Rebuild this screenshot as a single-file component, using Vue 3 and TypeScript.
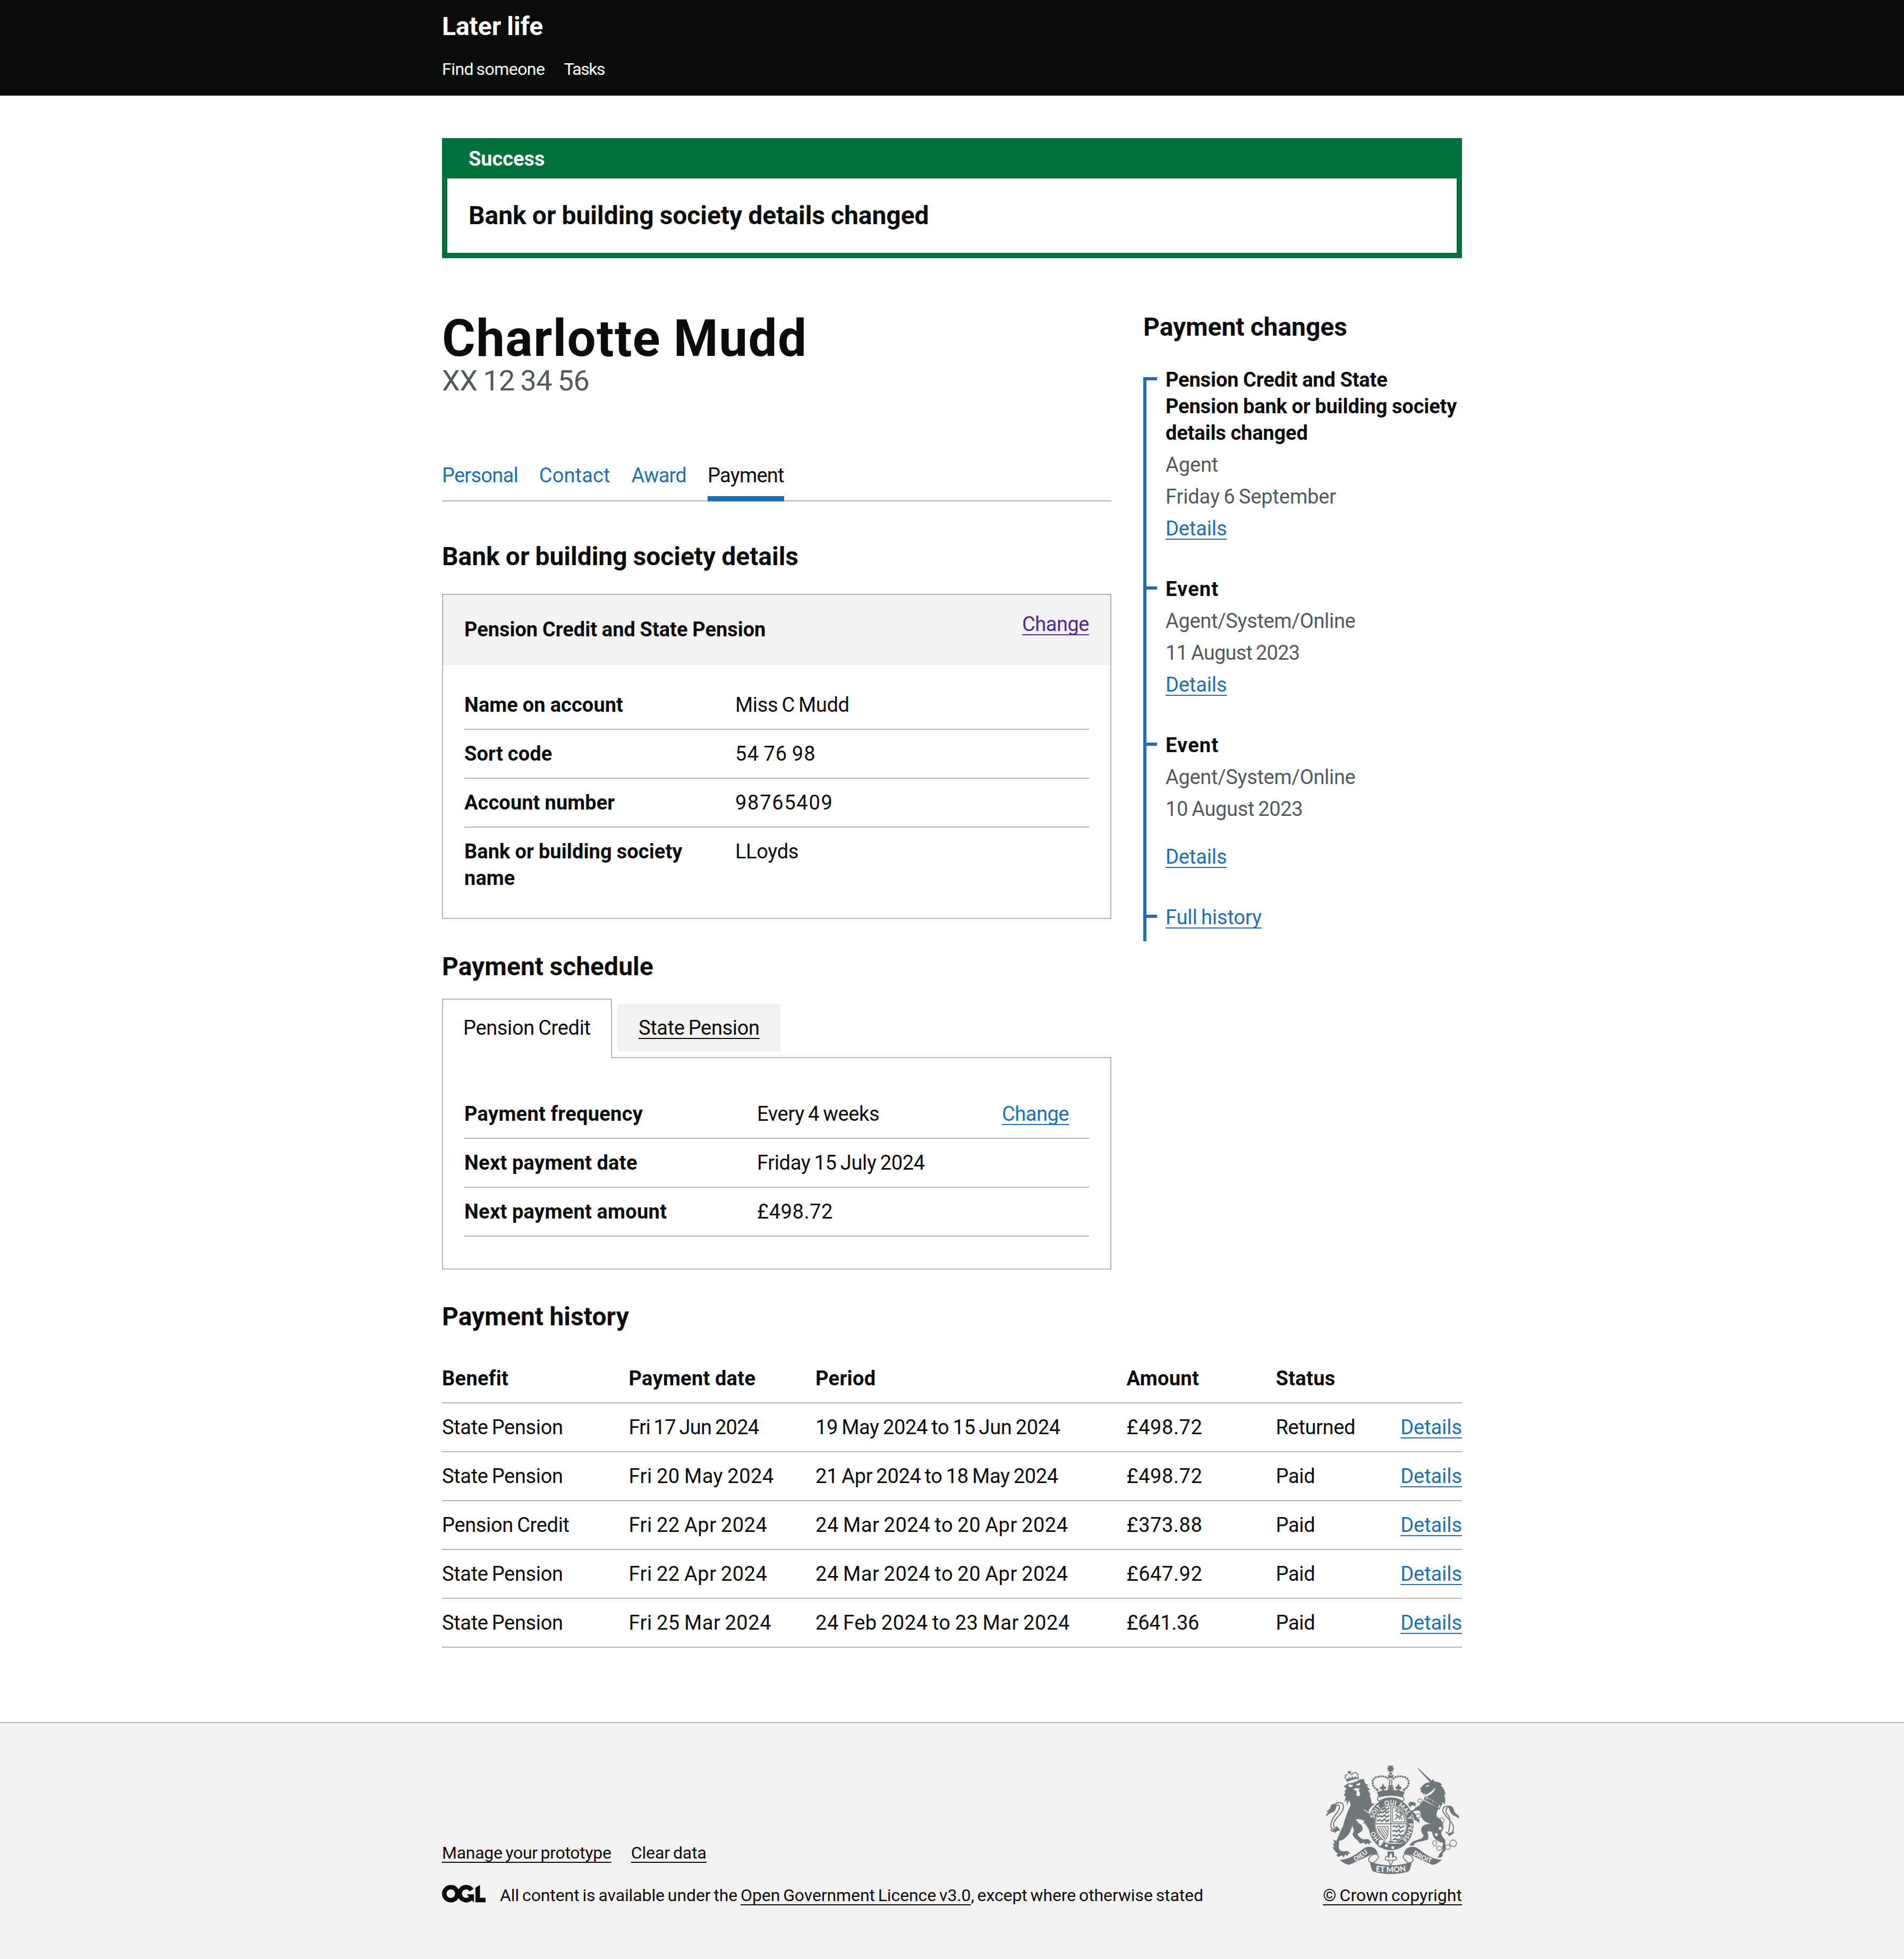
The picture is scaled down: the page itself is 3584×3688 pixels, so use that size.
<script setup lang="ts">
interface SummaryRow {
  key: string
  value: string
  action?: string
}

interface TimelineEvent {
  title: string
  by: string
  date: string
  spaced?: boolean
}

interface Payment {
  benefit: string
  date: string
  period: string
  amount: string
  status: string
}

const navigation: string[] = ['Find someone', 'Tasks']

const sections: { label: string; current: boolean }[] = [
  { label: 'Personal', current: false },
  { label: 'Contact', current: false },
  { label: 'Award', current: false },
  { label: 'Payment', current: true },
]

const account: SummaryRow[] = [
  { key: 'Name on account', value: 'Miss C Mudd' },
  { key: 'Sort code', value: '54 76 98' },
  { key: 'Account number', value: '98765409' },
  { key: 'Bank or building society name', value: 'LLoyds' },
]

const schedule: SummaryRow[] = [
  { key: 'Payment frequency', value: 'Every 4 weeks', action: 'Change' },
  { key: 'Next payment date', value: 'Friday 15 July 2024' },
  { key: 'Next payment amount', value: '£498.72' },
]

const events: TimelineEvent[] = [
  {
    title: 'Pension Credit and State Pension bank or building society details changed',
    by: 'Agent',
    date: 'Friday 6 September',
  },
  { title: 'Event', by: 'Agent/System/Online', date: '11 August 2023' },
  { title: 'Event', by: 'Agent/System/Online', date: '10 August 2023', spaced: true },
]

const payments: Payment[] = [
  { benefit: 'State Pension', date: 'Fri 17 Jun 2024', period: '19 May 2024 to 15 Jun 2024', amount: '£498.72', status: 'Returned' },
  { benefit: 'State Pension', date: 'Fri 20 May 2024', period: '21 Apr 2024 to 18 May 2024', amount: '£498.72', status: 'Paid' },
  { benefit: 'Pension Credit', date: 'Fri 22 Apr 2024', period: '24 Mar 2024 to 20 Apr 2024', amount: '£373.88', status: 'Paid' },
  { benefit: 'State Pension', date: 'Fri 22 Apr 2024', period: '24 Mar 2024 to 20 Apr 2024', amount: '£647.92', status: 'Paid' },
  { benefit: 'State Pension', date: 'Fri 25 Mar 2024', period: '24 Feb 2024 to 23 Mar 2024', amount: '£641.36', status: 'Paid' },
]

/** Picks the figure spacing: runs with a narrow 1 are set tighter than the rest. */
function figures(text: string): string {
  if (/^\d+$/.test(text)) return 'figures-wide'
  if (/^[\d ]+$/.test(text)) return 'figures-grouped'
  if (text.startsWith('11') || text.startsWith('Fri 17')) return 'figures-tight'
  return /\d{2}/.test(text) && !text.includes('1') ? 'figures' : ''
}
</script>

<template>
  <div class="page">
    <header class="header">
      <div class="container">
        <a class="service-name">Later life</a>
        <nav class="header-nav">
          <a v-for="item in navigation" :key="item">{{ item }}</a>
        </nav>
      </div>
    </header>

    <main class="container">
      <section class="banner">
        <h2 class="banner-title">Success</h2>
        <p class="banner-message">Bank or building society details changed</p>
      </section>

      <div class="columns">
        <div class="main-column">
          <h1>Charlotte Mudd</h1>
          <p class="nino">XX 12 34 56</p>

          <nav class="sections">
            <a v-for="s in sections" :key="s.label" :class="{ current: s.current }">{{ s.label }}</a>
          </nav>

          <h2 class="heading">Bank or building society details</h2>
          <section class="card">
            <div class="card-header">
              <h3>Pension Credit and State Pension</h3>
              <a class="link visited">Change</a>
            </div>
            <dl class="summary">
              <div v-for="row in account" :key="row.key" class="summary-row">
                <dt>{{ row.key }}</dt>
                <dd :class="figures(row.value)">{{ row.value }}</dd>
              </div>
            </dl>
          </section>

          <h2 class="heading schedule-heading">Payment schedule</h2>
          <div class="tab-list">
            <a class="tab selected">Pension Credit</a>
            <a class="tab"><span class="link plain">State Pension</span></a>
          </div>
          <section class="panel">
            <dl class="summary wide">
              <div v-for="row in schedule" :key="row.key" class="summary-row">
                <dt>{{ row.key }}</dt>
                <dd :class="figures(row.value)">{{ row.value }}</dd>
                <dd v-if="row.action" class="action"><a class="link">{{ row.action }}</a></dd>
              </div>
            </dl>
          </section>
        </div>

        <aside class="side-column">
          <h2 class="heading">Payment changes</h2>
          <ul class="timeline">
            <li v-for="(e, i) in events" :key="i">
              <h3>{{ e.title }}</h3>
              <p>{{ e.by }}</p>
              <p :class="figures(e.date)">{{ e.date }}</p>
              <a class="link" :class="{ spaced: e.spaced }">Details</a>
            </li>
            <li><a class="link">Full history</a></li>
          </ul>
        </aside>
      </div>

      <h2 class="heading history-heading">Payment history</h2>
      <table>
        <thead>
          <tr>
            <th class="c1">Benefit</th>
            <th class="c2">Payment date</th>
            <th class="c3">Period</th>
            <th class="c4">Amount</th>
            <th class="c5">Status</th>
            <th></th>
          </tr>
        </thead>
        <tbody>
          <tr v-for="(p, i) in payments" :key="i">
            <td>{{ p.benefit }}</td>
            <td :class="figures(p.date)">{{ p.date }}</td>
            <td :class="figures(p.period)">{{ p.period }}</td>
            <td :class="figures(p.amount)">{{ p.amount }}</td>
            <td>{{ p.status }}</td>
            <td class="right"><a class="link">Details</a></td>
          </tr>
        </tbody>
      </table>
    </main>

    <footer class="footer">
      <div class="container footer-inner">
        <div class="footer-left">
          <div class="footer-links">
            <a class="link plain manage">Manage your prototype</a>
            <a class="link plain">Clear data</a>
          </div>
          <div class="licence">
            <svg class="ogl" viewBox="0 0 483.2 195.7" aria-hidden="true">
              <path
                fill="currentColor"
                d="M421.5 142.8V.1l-50.7 32.3v161.1h112.4v-50.7zm-122.3-9.6A47.12 47.12 0 0 1 221 97.8c0-26 21.1-47.1 47.1-47.1 16.7 0 31.4 8.7 39.7 21.8l42.7-27.2A97.63 97.63 0 0 0 268.1 0c-36.5 0-68.3 20.1-85.1 49.7A98 98 0 0 0 97.8 0C43.9 0 0 43.9 0 97.8s43.9 97.8 97.8 97.8c36.5 0 68.3-20.1 85.1-49.7a97.76 97.76 0 0 0 149.6 25.4l19.4 22.2h3v-87.8h-80l24.3 27.5zM97.8 145c-26 0-47.1-21.1-47.1-47.1s21.1-47.1 47.1-47.1 47.1 21.1 47.1 47.1S123.8 145 97.8 145"
              />
            </svg>
            <span>All content is available under the <a class="link plain">Open Government Licence v3.0</a>, except where otherwise stated</span>
          </div>
        </div>

        <div class="footer-right">
          <svg class="crest" viewBox="108 72 750 612" aria-hidden="true">
            <defs>
              <path id="garter" d="M475 513C420 513 375 463 375 402S420 291 475 291S575 341 575 402S530 513 475 513" />
              <path id="dieu" d="M252 622Q314 598 362 548" />
              <path id="droit" d="M584 562Q640 606 716 627" />
              <path id="etmon" d="M380 668Q474 682 568 666" />
            </defs>

            <!-- lion -->
            <g class="ink">
              <path
                d="M207 190L226 178L232 168Q252 170 272 160Q292 149 322 148L328 172L350 184L336 186L360 211L344 208L362 240L352 236Q366 262 364 284L383 289Q358 304 348 330L366 352Q376 362 366 374L383 398L380 428L368 420L362 432L352 420L344 428L340 412L330 412L334 398L320 400L324 384Q300 370 276 376Q288 396 302 402Q322 418 312 440L286 458Q294 478 318 488L346 487L368 507L354 506L356 520L340 509L332 519L322 506L300 513L288 495Q262 478 258 460L266 438L256 411Q250 438 236 460Q212 492 182 498L180 538Q184 554 206 556L232 554L245 570L232 569L230 584L216 574L208 590L196 578L178 589L168 580L174 568Q154 556 144 528L156 534L144 510L156 516L150 490L166 498Q190 440 204 414Q220 350 248 292L238 268L226 298L224 266L212 278L220 246L208 240L220 218L210 222L224 200Z"
              />
              <path d="M168 293Q152 282 138 294L130 312Q122 326 110 330Q114 334 122 333Q108 344 109 360Q124 342 150 334Q166 322 168 293Z" />
              <path d="M128 432Q140 440 150 438L140 424L158 430L166 414Q184 424 186 438Q170 438 154 456L156 446Q136 448 128 432Z" />
              <path d="M218 140L224 150L236 144L240 134L248 146L256 130L264 142L274 130L278 140L288 136L286 146Q258 150 230 162Z" />
              <path d="M234 102L241 105L246 100L248 108L254 110L247 114L246 121L240 117L233 119L235 112L230 107Z" />
            </g>
            <path class="line w6" d="M160 288C188 274 204 282 207 300C209 326 182 350 164 374C148 396 146 416 160 424" />
            <path class="line w6" d="M164 298C190 286 188 312 172 336C148 364 132 390 136 416L142 436" />
            <path class="beads small" d="M228 158L214 136Q220 118 236 124M290 146L288 122Q278 106 262 114L250 124" />
            <g class="paper">
              <path d="M232 180Q250 176 262 184Q252 196 240 192Z" />
              <path d="M276 178L302 168L300 180Q288 188 276 178Z" />
              <path d="M262 206L276 198L300 202L292 214Q304 226 300 238Q292 250 280 240L282 216Z" />
            </g>
            <path class="gap" d="M322 320L366 350M232 172Q270 168 296 150" />

            <!-- unicorn -->
            <g class="ink">
              <path
                d="M624 88L630 88L706 158L708 146L722 162Q752 164 764 180L754 182Q778 198 784 238L774 232Q786 262 778 294L768 276L762 298L676 246Q722 228 725 196Q706 222 664 240L670 226L656 234L652 222L640 222L648 212L638 206Q650 182 676 168L696 166Z"
              />
              <path
                d="M656 272Q700 284 742 316Q728 342 734 360Q768 380 770 410Q774 434 758 446Q758 470 782 492L782 552L766 566Q772 576 760 590L738 592L748 572L764 552L768 508Q744 504 728 490Q710 474 708 448Q690 438 680 446Q690 470 684 490Q650 500 622 504Q600 514 606 524L580 524Q584 508 604 498L650 482L660 468Q636 438 652 416Q662 402 700 400Q660 392 646 362L640 330L622 324L598 332L612 344L622 370L636 376L634 396L620 384L606 378L596 344L580 330L606 320L616 304L600 296L590 296L586 310L572 292L582 276L606 278L634 300Q642 282 656 272Z"
              />
              <path d="M796 300Q818 294 828 314Q828 334 858 356L857 372Q846 358 828 354Q806 340 800 304Z" />
              <path d="M786 442Q800 462 828 442L832 456L820 452L824 462Q808 460 806 474Q800 456 784 452Z" />
            </g>
            <path class="line w6" d="M808 302C780 296 766 308 768 328C774 354 812 376 826 410Q832 430 820 448M802 306C782 310 780 332 796 350C812 366 812 398 800 446" />
            <path class="collar" d="M668 248L756 296L748 316L660 272Z" />
            <path class="ink" d="M668 268L666 254L678 262L686 256L692 268L704 264L708 278L722 274L724 286L738 284L746 294L742 310Z" />
            <path class="paper" d="M668 190Q680 178 694 184Q684 192 668 190Z" />
            <g class="chain">
              <ellipse cx="638" cy="270" rx="12" ry="10" />
              <ellipse cx="628" cy="355" rx="13" ry="12" />
              <ellipse cx="762" cy="381" rx="13" ry="14" />
              <ellipse cx="722" cy="510" rx="11" ry="14" />
              <ellipse cx="747" cy="538" rx="14" ry="12" />
              <ellipse cx="796" cy="532" rx="14" ry="13" />
              <circle cx="826" cy="511" r="19" />
            </g>
            <g class="paper">
              <ellipse cx="620" cy="298" rx="7" ry="9" />
              <ellipse cx="753" cy="427" rx="8" ry="9" />
              <ellipse cx="731" cy="461" rx="8" ry="9" />
            </g>

            <!-- crown -->
            <g class="ink">
              <path d="M456 72L490 72L482 84L490 80L490 100L480 94L490 106L456 106L466 94L456 100L456 80L466 84Z" />
              <path d="M473 106L486 122L460 122Z" />
              <path d="M456 126H491Q489 143 473 143Q458 143 456 126Z" />
              <path d="M464 150H470V184H464ZM476 150H482V184H476Z" />
              <path d="M457 184L489 184L480 197L490 192V212L480 206L486 220H460L466 206L457 212V192L466 197Z" />
              <path d="M430 172L438 190L448 192L444 206L434 204L438 216H422L426 204L414 206L412 194L422 190Z" />
              <path d="M517 172L509 190L499 192L503 206L513 204L509 216H525L521 204L533 206L535 194L525 190Z" />
              <path d="M388 198L408 208L396 218ZM558 198L538 208L552 218Z" />
              <path d="M396 220Q473 198 552 220L544 246Q473 232 404 246Z" />
            </g>
            <path class="beads" d="M394 206C366 190 360 146 396 136C422 128 444 132 460 146" />
            <path class="beads" d="M552 206C580 190 586 146 550 136C524 128 502 132 488 146" />

            <!-- garter and shield -->
            <path class="roll" d="M408 272Q392 264 402 250Q473 228 545 250Q554 264 540 272Q473 236 408 272Z" />
            <ellipse class="ink" cx="475" cy="402" rx="128" ry="148" />
            <ellipse class="paper" cx="475" cy="402" rx="92" ry="110" />
            <ellipse class="shield" cx="475" cy="402" rx="88" ry="105" />
            <path class="line w5" d="M474 298V506M387 400H563" />
            <path class="line w7" d="M408 344Q414 330 426 338L442 326L448 340L466 330M400 362Q414 350 424 362L440 350L448 364L466 352M396 386Q410 372 424 386L440 374L450 388L466 376M426 322L440 312L450 322L466 310" />
            <path class="line w7" d="M484 418Q494 408 506 420L520 410L528 424L550 412M484 444Q496 432 506 446L520 434L528 448L548 436M484 470Q496 458 508 472L522 460L530 472L542 462M486 492L500 484L514 494L522 486" />
            <path class="line w4" d="M400 416H458V440Q460 470 444 488Q410 466 398 416M412 422L446 474M424 420L454 466M438 420L456 448M404 430L440 480" />
            <path class="line w4" d="M484 308Q546 318 554 390H484Z" />
            <path class="line w6" d="M496 330L508 322L512 336L524 334L534 352L524 358L538 376M500 348L512 354L506 370L496 376M514 354L524 376M530 334L540 346" />
            <path class="ink" d="M462 498H488V506H462Z" />
            <g class="motto">
              <text><textPath href="#garter" startOffset="15%">HO</textPath></text>
              <text><textPath href="#garter" startOffset="35.5%">SOIT</textPath></text>
              <text><textPath href="#garter" startOffset="49.5%">QUI</textPath></text>
              <text><textPath href="#garter" startOffset="64%">MAL Y</textPath></text>
              <text><textPath href="#garter" startOffset="82%">PENSE</textPath></text>
            </g>
            <path class="outlined" d="M400 500Q412 484 424 488L440 496L424 520L410 530Q396 516 406 508Z" />
            <circle class="paper" cx="449" cy="523" r="8" />
            <circle class="paper" cx="485" cy="535" r="8" />
            <path class="gap" d="M428 494Q474 520 540 508" />

            <!-- fleur-de-lis -->
            <path class="ink" d="M456 557H492V598H456Z" />
            <path
              class="outlined"
              d="M474 562Q488 576 482 592Q496 576 506 592Q508 606 492 606Q484 606 484 614L476 632H472L464 614Q464 606 456 606Q440 606 442 592Q452 576 466 592Q460 576 474 562Z"
            />
            <path class="line w4" d="M456 606H492" />

            <!-- ribbon -->
            <g class="outlined">
              <path d="M348 604Q350 584 376 574Q396 570 406 584Q400 604 374 622Q350 620 348 604Z" />
              <path d="M600 604Q598 584 572 574Q552 570 542 584Q548 604 574 622Q598 620 600 604Z" />
            </g>
            <g class="ink">
              <path d="M186 604Q250 600 312 546Q340 522 374 534Q392 540 402 572Q374 568 348 582Q310 600 240 632Q214 632 186 604Z" />
              <path d="M762 604Q698 600 636 546Q608 522 574 534Q556 540 546 572Q574 568 600 582Q638 600 708 632Q734 632 762 604Z" />
              <path d="M356 614Q474 656 592 614Q586 658 574 670Q530 684 474 684T374 670Q362 658 356 614Z" />
            </g>
            <g class="motto large">
              <text><textPath href="#dieu" startOffset="50%">DIEU</textPath></text>
              <text><textPath href="#droit" startOffset="50%">DROIT</textPath></text>
              <text class="bottom"><textPath href="#etmon" startOffset="50%">ET MON</textPath></text>
            </g>
          </svg>
          <a class="link plain crown">© Crown copyright</a>
        </div>
      </div>
    </footer>
  </div>
</template>

<style>
body {
  background: #fff;
}
</style>

<style scoped>
.page {
  color: #0b0c0c;
  font-family: Roboto, 'Liberation Sans', sans-serif;
  font-size: 38px;
  line-height: 50px;
  letter-spacing: -0.009em;
  word-spacing: -0.05em;
}

h1,
h2,
h3,
p,
ul,
dl,
dd {
  margin: 0;
  padding: 0;
}

h1,
h2,
h3,
dt,
th,
.service-name,
.banner-message {
  font-weight: 700;
  letter-spacing: -0.001em;
  word-spacing: -0.015em;
}

h3 {
  font-size: 38px;
}

.figures {
  letter-spacing: 0.015em;
}

.figures-wide {
  letter-spacing: 0.045em;
}

.figures-grouped {
  letter-spacing: 0.028em;
}

.timeline .figures-tight,
.figures-tight {
  letter-spacing: -0.02em;
}

.container {
  width: 1920px;
  margin: 0 auto;
}

.header {
  box-sizing: border-box;
  height: 180px;
  padding-top: 20px;
  color: #fff;
  background: #0b0c0c;
}

.service-name {
  display: block;
  font-size: 48px;
  line-height: 60px;
}

.header-nav {
  display: flex;
  gap: 36px;
  margin-top: 30px;
  font-size: 32px;
  line-height: 40px;
  letter-spacing: -0.017em;
}

.header-nav a + a {
  letter-spacing: -0.045em;
}

.banner {
  margin-top: 80px;
  border: 10px solid #00703c;
}

.banner-title {
  padding: 4px 40px 12px;
  color: #fff;
  background: #00703c;
  font-size: 38px;
}

.banner-message {
  padding: 40px;
  font-size: 48px;
  line-height: 60px;
}

.columns {
  display: flex;
  gap: 60px;
  align-items: flex-start;
  margin-top: 101px;
}

.main-column {
  width: 1260px;
}

.side-column {
  width: 600px;
  margin-top: -1px;
}

h1 {
  font-size: 96px;
  line-height: 100px;
  letter-spacing: 0.0145em;
}

.nino {
  color: #505a5f;
  font-size: 54px;
  line-height: 60px;
  letter-spacing: -0.012em;
}

.sections {
  display: flex;
  gap: 40px;
  margin-top: 123px;
  border-bottom: 2px solid #b1b4b6;
  letter-spacing: -0.02em;
}

.sections a {
  margin-bottom: -2px;
  padding-bottom: 14px;
  border-bottom: 10px solid transparent;
  color: #1d70b8;
}

.sections a:nth-child(2) {
  letter-spacing: 0.003em;
}

.sections .current {
  border-bottom-color: #1d70b8;
  color: #0b0c0c;
}

.heading {
  font-size: 48px;
  line-height: 60px;
}

.schedule-heading,
.history-heading {
  letter-spacing: 0.001em;
}

.sections + .heading {
  margin-top: 74px;
}

.link {
  color: #1d70b8;
  text-decoration: underline;
  text-decoration-thickness: 2px;
  text-decoration-skip-ink: none;
  text-underline-offset: 6px;
}

.link.visited {
  color: #4c2c92;
}

.link.plain {
  color: #0b0c0c;
}

.card {
  margin-top: 40px;
  border: 2px solid #b1b4b6;
}

.card-header {
  display: flex;
  justify-content: space-between;
  box-sizing: border-box;
  height: 132px;
  padding: 30px 40px;
  background: #f3f2f1;
}

.card-header h3 {
  margin-top: 10px;
}

.card-header .link,
.action .link {
  letter-spacing: -0.012em;
}

.card .summary {
  padding: 30px 40px;
}

.summary-row {
  display: flex;
  padding: 20px 0;
  border-bottom: 2px solid #b1b4b6;
}

.card .summary-row:last-child {
  border-bottom: 0;
}

.summary dt {
  box-sizing: border-box;
  flex: none;
  width: 510px;
  padding-right: 60px;
  letter-spacing: 0.002em;
}

.summary.wide dt {
  width: 551px;
  letter-spacing: 0.008em;
}

.summary .action {
  margin-left: auto;
  padding-right: 38px;
}

.schedule-heading {
  margin-top: 60px;
}

.tab-list {
  display: flex;
  align-items: flex-start;
  gap: 10px;
  margin-top: 30px;
}

.tab {
  box-sizing: border-box;
  width: 307px;
  height: 90px;
  margin-top: 10px;
  padding: 20px 0 20px 40px;
  background: #f3f2f1;
  white-space: nowrap;
}

.tab.selected {
  position: relative;
  width: 320px;
  height: 112px;
  margin: 0 0 -2px;
  padding: 28px 0 0 38px;
  border: 2px solid #b1b4b6;
  border-bottom: 0;
  background: #fff;
}

.panel {
  padding: 60px 40px;
  border: 2px solid #b1b4b6;
}

.timeline {
  display: flow-root;
  margin-top: 64px;
  padding: 0 0 20px 36px;
  border-left: 6px solid #1d70b8;
  list-style: none;
}

.timeline li {
  position: relative;
  margin-top: 64px;
}

.timeline li:first-child {
  margin-top: -20px;
}

/* connects each event to the vertical line */
.timeline li::before {
  content: '';
  position: absolute;
  top: 20px;
  left: -36px;
  width: 20px;
  height: 6px;
  background: #1d70b8;
}

.timeline h3 {
  letter-spacing: -0.004em;
}

.timeline li + li h3 {
  letter-spacing: 0.03em;
}

.timeline h3,
.timeline p {
  margin-bottom: 10px;
}

.timeline p {
  color: #505a5f;
}

.timeline li:first-child p {
  letter-spacing: -0.003em;
}

.timeline .link {
  display: block;
  width: fit-content;
  letter-spacing: -0.003em;
}

.timeline .spaced {
  margin-top: 40px;
}

.history-heading {
  margin-top: 59px;
}

table {
  width: 100%;
  margin-top: 41px;
  border-collapse: separate;
  border-spacing: 0;
  table-layout: fixed;
}

th,
td {
  height: 50px;
  padding: 20px 0;
  border-bottom: 2px solid #b1b4b6;
  text-align: left;
  white-space: nowrap;
}

th {
  letter-spacing: 0.008em;
}

.c1,
.c2 {
  width: 351.5px;
}

.c3 {
  width: 585.5px;
}

.c4 {
  width: 281px;
}

.c5 {
  width: 200px;
}

.right {
  letter-spacing: -0.002em;
  text-align: right;
}

.footer {
  margin-top: 140px;
  padding: 80px 0 100px;
  border-top: 2px solid #b1b4b6;
  background: #f3f2f1;
  font-size: 32px;
  line-height: 40px;
  letter-spacing: -0.0035em;
}

.footer-inner {
  display: flex;
  align-items: flex-end;
  justify-content: space-between;
}

.footer-links {
  display: flex;
  gap: 37px;
  margin-bottom: 40px;
}

.manage {
  letter-spacing: -0.009em;
}

.licence {
  display: flex;
  gap: 27px;
}

.ogl {
  width: 82px;
  height: 34px;
}

.footer-right {
  display: flex;
  flex-direction: column;
  align-items: center;
  gap: 20px;
}

.crown {
  letter-spacing: 0.001em;
}

.crest {
  width: 250px;
  height: 204px;
}

.ink {
  fill: #6f777b;
}

.paper {
  fill: #f3f2f1;
}

.line,
.shield,
.chain,
.beads,
.gap {
  fill: none;
  stroke: #6f777b;
  stroke-linejoin: round;
}

.gap {
  stroke: #f3f2f1;
  stroke-width: 4;
}

.w4 {
  stroke-width: 4;
}

.w5 {
  stroke-width: 5;
}

.w6 {
  stroke-width: 6;
}

.w7 {
  stroke-width: 8;
}

.shield,
.chain {
  stroke-width: 4;
}

.beads {
  stroke-width: 12;
  stroke-linecap: round;
  stroke-dasharray: 0 14;
}

.beads.small {
  stroke-width: 9;
  stroke-dasharray: 0 11;
}

.roll,
.collar,
.outlined {
  fill: #f3f2f1;
  stroke: #6f777b;
  stroke-width: 5;
}

.motto {
  fill: #f3f2f1;
  font-family: Lato, sans-serif;
  font-size: 34px;
  font-weight: 900;
  letter-spacing: 0;
  word-spacing: 0;
  text-anchor: middle;
}

.motto.large {
  font-size: 37px;
}

.motto .bottom {
  font-size: 44px;
}
</style>
